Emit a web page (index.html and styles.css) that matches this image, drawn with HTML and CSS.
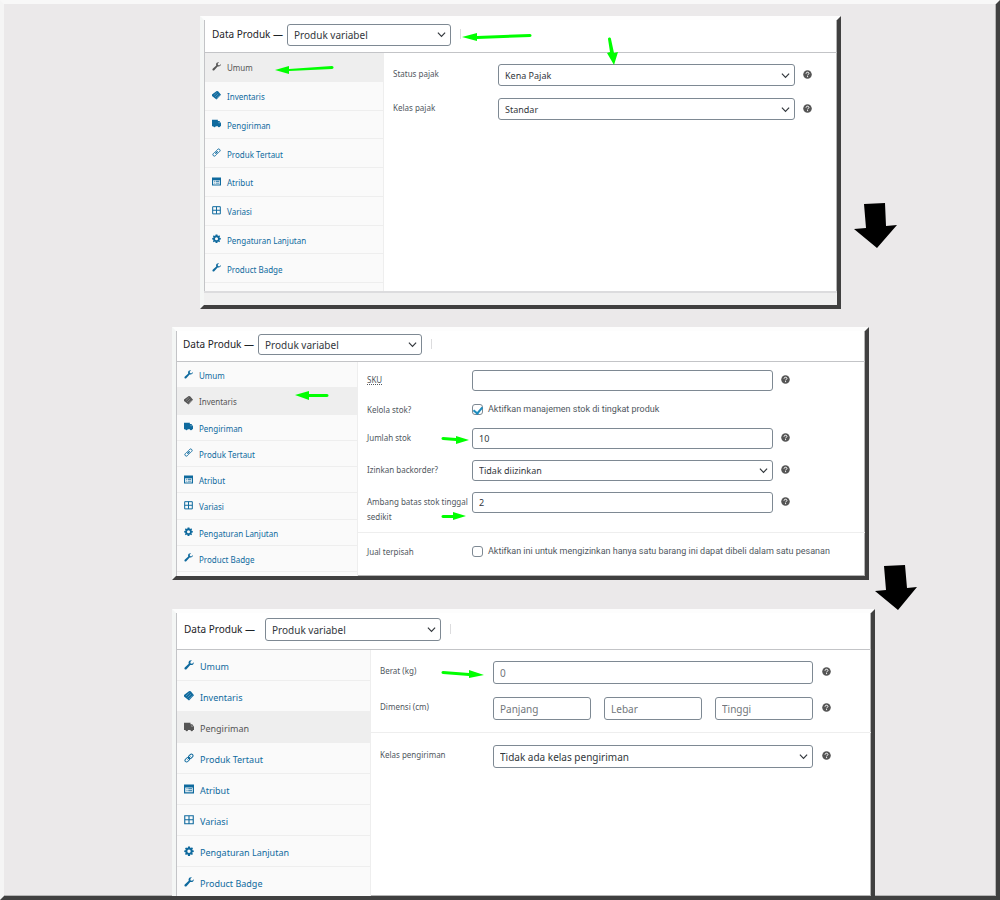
FILE: index.html
```
<!DOCTYPE html>
<html lang="id">
<head>
<meta charset="utf-8">
<meta name="viewport" content="width=device-width, initial-scale=1">
<title>Data Produk</title>
<link rel="stylesheet" href="styles.css">
</head>
<body>
<svg class="defs" aria-hidden="true">
  <symbol id="i-wrench" viewBox="0 0 20 20"><path d="M18.500 8.400c-1.600 1.800-4 2.200-6 1.400L5 18.300c-.9.9-2.600.9-3.500 0-.9-.9-.9-2.500 0-3.400l8-7.400c-.8-2-.4-4.300 1.200-5.900C12 .4 14 0 15.800.6L12.600 3.900l.7 2.900 3 .7 3-3c.4 1.400.2 2.800-.8 3.900z"/></symbol>
  <symbol id="i-tag" viewBox="0 0 20 20"><path d="M0 8 10.500 0l3 .4 6.500 8-10 10.600L0 11z"/><path d="m4 10 7-6.500M7 13l7-6.500M10 16l7-6.500" fill="none" stroke="#fff" stroke-opacity=".5" stroke-width="1.200"/></symbol>
  <symbol id="i-truck" viewBox="0 0 20 20"><path d="M0 1.500h13v3h3.500L20 9.500v6.500h-2a2.500 2.500 0 0 1-5 0H8a2.500 2.500 0 0 1-5 0H0z"/><path d="M14.500 6.500v3h4L16 6.500z" fill="#fff" fill-opacity=".4"/></symbol>
  <symbol id="i-link" viewBox="0 0 20 20"><g fill="none" stroke="currentColor" stroke-width="2"><rect x="8.500" y="3.500" width="10" height="6.400" rx="3.200" transform="rotate(-45 13.500 6.700)"/><rect x="1.500" y="10.300" width="10" height="6.400" rx="3.200" transform="rotate(-45 6.500 13.500)"/><path d="m7 13 6-6"/></g></symbol>
  <symbol id="i-list" viewBox="0 0 20 20"><path fill-rule="evenodd" d="M0 1h20v18H0zM2.500 7v9.500h15V7z"/><path d="M5 8.500h2v2H5zm3.500 0H16v2H8.500zM5 12.500h2v2H5zm3.500 0H16v2H8.500z"/></symbol>
  <symbol id="i-grid" viewBox="0 0 20 20"><path d="M1.500 1.500h17v16h-17zM10 1.500v16M1.500 9.500h17" fill="none" stroke="currentColor" stroke-width="2.200"/></symbol>
  <symbol id="i-gear" viewBox="0 0 20 20"><path fill-rule="evenodd" d="M8 1h4l.5 2.600 1.400.6L16 2.700 18 5l-1.500 2.200.6 1.300 2.400.5v3l-2.500.5-.6 1.400L18 16l-2.200 2.200-2.100-1.500-1.300.6L12 20H8l-.5-2.700-1.300-.6L4 18.200 1.900 16l1.500-2.200-.6-1.300L.5 12V9l2.400-.5.6-1.300L2 5l2.100-2.200 2.100 1.400 1.400-.6zM10 7a3.400 3.400 0 1 0 0 6.800A3.400 3.400 0 0 0 10 7z"/></symbol>
  <symbol id="i-help" viewBox="0 0 20 20"><circle cx="10" cy="10" r="9.500"/><path d="M6.800 8.200C6.800 6 8.200 5 10 5s3.200 1 3.200 2.700c0 2-3 2.300-3 4.300M10.200 13.500v2.300" fill="none" stroke="#fff" stroke-width="2.200"/></symbol>
  <symbol id="i-down" viewBox="0 0 10 10"><path d="m1 3 4 4 4-4" fill="none" stroke="currentColor" stroke-width="1.300"/></symbol>
</svg>

<main class="board">

  <section class="panel panel-general">
    <header class="head">
      <label for="type1">Data Produk —</label>
      <span class="select"><select id="type1"><option>Produk variabel</option></select><svg><use href="#i-down"/></svg></span>
      <span class="rule"></span>
    </header>
    <div class="body">
      <nav class="tabs">
        <a class="active" href="#umum"><svg><use href="#i-wrench"/></svg>Umum</a>
        <a href="#inventaris"><svg><use href="#i-tag"/></svg>Inventaris</a>
        <a href="#pengiriman"><svg><use href="#i-truck"/></svg>Pengiriman</a>
        <a href="#tertaut"><svg><use href="#i-link"/></svg>Produk Tertaut</a>
        <a href="#atribut"><svg><use href="#i-list"/></svg>Atribut</a>
        <a href="#variasi"><svg><use href="#i-grid"/></svg>Variasi</a>
        <a href="#lanjutan"><svg><use href="#i-gear"/></svg>Pengaturan Lanjutan</a>
        <a href="#badge"><svg><use href="#i-wrench"/></svg>Product Badge</a>
      </nav>
      <form class="fields">
        <div class="row">
          <label for="tax">Status pajak</label>
          <span class="select"><select id="tax"><option>Kena Pajak</option></select><svg><use href="#i-down"/></svg></span>
          <svg class="help"><use href="#i-help"/></svg>
        </div>
        <div class="row">
          <label for="taxclass">Kelas pajak</label>
          <span class="select"><select id="taxclass"><option>Standar</option></select><svg><use href="#i-down"/></svg></span>
          <svg class="help"><use href="#i-help"/></svg>
        </div>
      </form>
    </div>
    <div class="foot"></div>
    <svg class="marks" aria-hidden="true">
      <g class="green">
        <path d="m258 17 15-4v3l53-2c2 0 2 3 0 3l-53 2v2z"/>
        <path d="m71 50 14-4v3l43-3c2 0 2 3 0 3l-43 2v3z"/>
        <path d="M404 19c0-2 3-2 3 0l3 14 4-1-4 13-7-12 3-1z"/>
      </g>
      <path d="m660 184 21-1 1 23 11-1-20 23-23-19 12-1z"/>
    </svg>
  </section>

  <section class="panel panel-stock">
    <header class="head">
      <label for="type2">Data Produk —</label>
      <span class="select"><select id="type2"><option>Produk variabel</option></select><svg><use href="#i-down"/></svg></span>
      <span class="rule"></span>
    </header>
    <div class="body">
      <nav class="tabs">
        <a href="#umum"><svg><use href="#i-wrench"/></svg>Umum</a>
        <a class="active" href="#inventaris"><svg><use href="#i-tag"/></svg>Inventaris</a>
        <a href="#pengiriman"><svg><use href="#i-truck"/></svg>Pengiriman</a>
        <a href="#tertaut"><svg><use href="#i-link"/></svg>Produk Tertaut</a>
        <a href="#atribut"><svg><use href="#i-list"/></svg>Atribut</a>
        <a href="#variasi"><svg><use href="#i-grid"/></svg>Variasi</a>
        <a href="#lanjutan"><svg><use href="#i-gear"/></svg>Pengaturan Lanjutan</a>
        <a href="#badge"><svg><use href="#i-wrench"/></svg>Product Badge</a>
      </nav>
      <form class="fields">
        <div class="row">
          <label for="sku"><abbr title="Stock Keeping Unit">SKU</abbr></label>
          <input id="sku" type="text">
          <svg class="help"><use href="#i-help"/></svg>
        </div>
        <div class="row row-check">
          <span>Kelola stok?</span>
          <label class="check"><input type="checkbox" checked>Aktifkan manajemen stok di tingkat produk</label>
        </div>
        <div class="row">
          <label for="qty">Jumlah stok</label>
          <input id="qty" type="text" value="10">
          <svg class="help"><use href="#i-help"/></svg>
        </div>
        <div class="row">
          <label for="backorder">Izinkan backorder?</label>
          <span class="select"><select id="backorder"><option>Tidak diizinkan</option></select><svg><use href="#i-down"/></svg></span>
          <svg class="help"><use href="#i-help"/></svg>
        </div>
        <div class="row row-tall">
          <label for="low">Ambang batas stok tinggal sedikit</label>
          <input id="low" type="text" value="2">
          <svg class="help"><use href="#i-help"/></svg>
        </div>
        <hr>
        <div class="row row-check">
          <span>Jual terpisah</span>
          <label class="check"><input type="checkbox">Aktifkan ini untuk mengizinkan hanya satu barang ini dapat dibeli dalam satu pesanan</label>
        </div>
      </form>
    </div>
    <svg class="marks" aria-hidden="true">
      <g class="green">
        <path d="m119 64 14-4v3h18c2 0 2 3 0 3h-18v3z"/>
        <path d="m293 109-13-4v2l-13-1c-2 0-2 3 0 3l13 1v3z"/>
        <path d="m290 185-13-4v3h-10c-2 0-2 3 0 3h10v2z"/>
      </g>
      <path d="m708 235 21-1 2 23 10-1-19 23-23-19 11-1z"/>
    </svg>
  </section>

  <section class="panel panel-shipping">
    <header class="head">
      <label for="type3">Data Produk —</label>
      <span class="select"><select id="type3"><option>Produk variabel</option></select><svg><use href="#i-down"/></svg></span>
      <span class="rule"></span>
    </header>
    <div class="body">
      <nav class="tabs">
        <a href="#umum"><svg><use href="#i-wrench"/></svg>Umum</a>
        <a href="#inventaris"><svg><use href="#i-tag"/></svg>Inventaris</a>
        <a class="active" href="#pengiriman"><svg><use href="#i-truck"/></svg>Pengiriman</a>
        <a href="#tertaut"><svg><use href="#i-link"/></svg>Produk Tertaut</a>
        <a href="#atribut"><svg><use href="#i-list"/></svg>Atribut</a>
        <a href="#variasi"><svg><use href="#i-grid"/></svg>Variasi</a>
        <a href="#lanjutan"><svg><use href="#i-gear"/></svg>Pengaturan Lanjutan</a>
        <a href="#badge"><svg><use href="#i-wrench"/></svg>Product Badge</a>
      </nav>
      <form class="fields">
        <div class="row">
          <label for="weight">Berat (kg)</label>
          <input id="weight" type="text" placeholder="0">
          <svg class="help"><use href="#i-help"/></svg>
        </div>
        <div class="row">
          <label for="length">Dimensi (cm)</label>
          <span class="trio">
            <input id="length" type="text" placeholder="Panjang">
            <input type="text" placeholder="Lebar" aria-label="Lebar">
            <input type="text" placeholder="Tinggi" aria-label="Tinggi">
          </span>
          <svg class="help"><use href="#i-help"/></svg>
        </div>
        <hr>
        <div class="row">
          <label for="shipclass">Kelas pengiriman</label>
          <span class="select"><select id="shipclass"><option>Tidak ada kelas pengiriman</option></select><svg><use href="#i-down"/></svg></span>
          <svg class="help"><use href="#i-help"/></svg>
        </div>
      </form>
    </div>
    <svg class="marks" aria-hidden="true">
      <g class="green">
        <path d="m308 62-15-5v3l-26-2c-2 0-2 3 0 3l26 2v2z"/>
      </g>
    </svg>
  </section>

</main>
</body>
</html>
```
FILE: styles.css
```
* {
  box-sizing: border-box;
}

body {
  margin: 0;
  font-family: "Noto Sans", "Open Sans", sans-serif;
  color: #50575e;
}

.defs {
  position: absolute;
  width: 0;
  height: 0;
}

svg {
  fill: currentColor;
}

.board {
  display: flex;
  flex-direction: column;
  align-items: center;
  gap: 18px;
  min-height: 100vh;
  padding: 12px 0 0 41px;
  border: 4px solid;
  border-color: #f8f8f8 #404040 #404040 #f5f5f5;
  background: #ebe9ea;
  box-shadow: inset -1px -1px #b5b5b5;
}

.panel {
  --tab-text: 8px;
  --label-text: 8px;
  --head-text: 10px;
  --field-text: 9px;
  --head-gap: 4px;
  --nav: 180px;
  --label: 105px;
  --control: 22px;
  --icon: 9px;
  position: relative;
  display: flex;
  flex-direction: column;
  width: 100%;
  border: 4px solid;
  border-color: #fdfdfd #404040 #404040 #f4f6f5;
  background: #fff;
  box-shadow: inset -1px -1px #b5b5b5;
}

.panel-general {
  max-width: 641px;
}

.panel-stock {
  --nav: 182px;
  --control: 21px;
  max-width: 697px;
}

.panel-shipping {
  --tab-text: 9px;
  --field-text: 10px;
  --head-gap: 10px;
  --nav: 195px;
  --label: 113px;
  --control: 23px;
  --icon: 10px;
  max-width: 703px;
  margin: 11px 0 0 6px;
  border-bottom: 0;
}

.head {
  display: flex;
  align-items: center;
  height: 33px;
  padding: 0 0 3px 7px;
  border-left: 1px solid #c3c4c7;
  border-bottom: 1px solid #c3c4c7;
  font-size: var(--head-text);
  color: #1d2327;
}

.head > label {
  padding: 0 var(--head-gap) 2px 0;
}

.head .select {
  width: 164px;
}

.head select {
  font-size: var(--head-text);
}

.panel-stock .head {
  height: 31px;
  padding-left: 6px;
}

.panel-shipping .head {
  height: 37px;
}

.panel-shipping .head .select {
  width: 176px;
}

.rule {
  width: 1px;
  height: 10px;
  margin: 0 0 2px 9px;
  background: #dcdcde;
}

.select {
  display: grid;
  align-items: center;
  color: #32373c;
}

.select > * {
  grid-area: 1 / 1;
}

.select svg {
  justify-self: end;
  width: 9px;
  height: 9px;
  margin-right: 5px;
  pointer-events: none;
}

select,
input[type="text"] {
  width: 100%;
  min-width: 0;
  height: var(--control);
  margin: 0;
  padding: 0 6px;
  border: 1px solid #7e8993;
  border-radius: 3px;
  background: #fff;
  color: #32373c;
  font-family: inherit;
  font-size: var(--field-text);
  appearance: none;
}

input::placeholder {
  color: #72777c;
  opacity: 1;
}

.body {
  display: grid;
  grid-template-columns: var(--nav) 1fr;
  flex: 1;
}

.tabs {
  display: flex;
  flex-direction: column;
  border-left: 1px solid #c3c4c7;
  border-right: 1px solid #eee;
  background: #fafafa;
  font-size: var(--tab-text);
}

.tabs a {
  display: flex;
  flex: 1;
  align-items: center;
  gap: 6px;
  padding: 2px 0 0 7px;
  border-bottom: 1px solid #eee;
  color: #0f6a9e;
  text-decoration: none;
}

.tabs a.active {
  background: #eee;
  color: #555;
}

.tabs svg {
  width: var(--icon);
  height: var(--icon);
  margin-bottom: 3px;
}

.panel-general .tabs {
  height: 238px;
  padding-bottom: 8px;
}

.panel-stock .tabs {
  height: 214px;
  padding-bottom: 4px;
}

.panel-shipping .body {
  height: 246px;
  flex: none;
  overflow: hidden;
}

.panel-shipping .tabs a {
  flex: none;
  height: 31px;
}

.fields {
  display: flex;
  flex-direction: column;
  gap: 12px;
  padding-top: 11px;
  font-size: var(--label-text);
  line-height: 15px;
}

.row {
  display: grid;
  grid-template-columns: var(--label) minmax(0, 297px) 9px;
  align-items: center;
  padding-left: 9px;
}

.row > label:first-child,
.row > span:first-child {
  align-self: start;
  padding-top: 2px;
}

.row-check > span:first-child {
  padding-top: 0;
}

.help {
  width: 9px;
  height: 9px;
  margin: 0 0 2px 8px;
  color: #555;
  overflow: visible;
}

.panel-stock .fields {
  gap: 11px;
  padding-top: 8px;
}

.panel-stock .row {
  grid-template-columns: var(--label) minmax(0, 301px) 9px;
}

.panel-stock .row-check {
  grid-template-columns: var(--label) 1fr;
}

.row-tall {
  align-items: start;
}

.row-tall .help {
  margin-top: 5px;
}

.check {
  display: flex;
  align-items: center;
  gap: 5px;
  font-family: Roboto, "Noto Sans", sans-serif;
  font-size: 9px;
}

.check input {
  display: grid;
  place-items: center;
  width: 11px;
  height: 11px;
  margin: 0;
  border: 1px solid #7e8993;
  border-radius: 3px;
  appearance: none;
}

.check input:checked::before {
  content: "";
  width: 4px;
  height: 7px;
  border: solid #1e8cbe;
  border-width: 0 2px 2px 0;
  transform: rotate(40deg);
}

abbr {
  text-decoration: underline dotted;
}

hr {
  width: 100%;
  margin: 0;
  border: 0;
  border-top: 1px solid #eee;
}

.panel-stock hr {
  margin-top: -3px;
}

.panel-shipping .fields {
  gap: 13px;
}

.panel-shipping hr {
  margin: -1px 0;
}

.panel-shipping .row {
  grid-template-columns: var(--label) minmax(0, 320px) 9px;
}

.panel-shipping .help {
  margin-left: 9px;
}

.trio {
  display: grid;
  grid-template-columns: repeat(3, 1fr);
  gap: 13px;
}

.foot {
  height: 14px;
  border-top: 2px solid #dcdcde;
  background: #f0f0f0;
}

.marks {
  position: absolute;
  inset: 0;
  width: 100%;
  height: 100%;
  overflow: visible;
  pointer-events: none;
  color: #000;
}

.green {
  fill: #0f0;
}
```
